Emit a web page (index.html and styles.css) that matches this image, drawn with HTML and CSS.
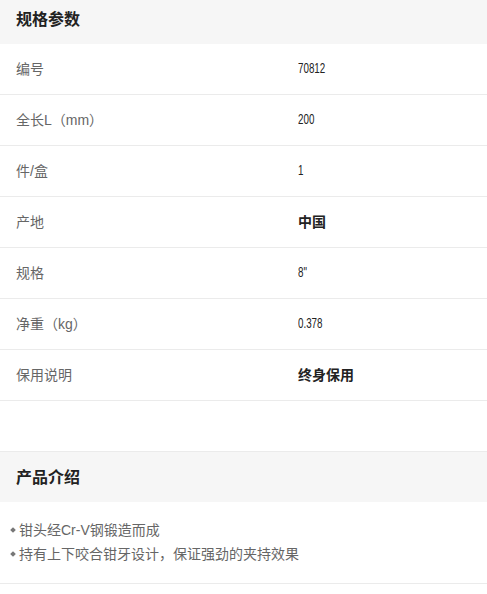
FILE: index.html
```html
<!DOCTYPE html>
<html lang="zh-CN">
<head>
  <meta charset="UTF-8" />
  <meta name="viewport" content="width=device-width, initial-scale=1.0" />
  <title>规格参数</title>
  <link rel="stylesheet" href="styles.css">
</head>
<body>
  <section class="specs">
    <h2 class="sec-title">规格参数</h2>
    <div class="row"><span class="label">编号</span><span class="val num">70812</span></div>
    <div class="row"><span class="label">全长L（mm）</span><span class="val num">200</span></div>
    <div class="row"><span class="label">件/盒</span><span class="val num">1</span></div>
    <div class="row"><span class="label">产地</span><span class="val">中国</span></div>
    <div class="row"><span class="label">规格</span><span class="val num">8"</span></div>
    <div class="row"><span class="label">净重（kg）</span><span class="val num">0.378</span></div>
    <div class="row"><span class="label">保用说明</span><span class="val">终身保用</span></div>
  </section>

  <section class="intro">
    <h2 class="sec-title">产品介绍</h2>
    <ul class="points">
      <li>钳头经Cr-V钢锻造而成</li>
      <li>持有上下咬合钳牙设计，保证强劲的夹持效果</li>
    </ul>
  </section>
</body>
</html>
```

FILE: styles.css
```css
:root{
  --gray-bg:#F6F6F6;
  --line:#EBEBEB;
  --label:#666666;
  --text:#222222;
}
*{box-sizing:border-box}
body{margin:0;font-family:"Liberation Sans","Noto Sans CJK SC",sans-serif;color:var(--text);background:#fff}
.specs{margin-top:-6px}
.sec-title{margin:0;height:50px;padding:0 16px 2px;display:flex;align-items:center;background:var(--gray-bg);font-size:16px;font-weight:700;color:var(--text)}
.row{display:grid;grid-template-columns:282px 1fr;align-items:center;height:51px;padding:0 16px 2px;border-bottom:1px solid var(--line)}
.row span{justify-self:start}
.label{font-size:14px;color:var(--label)}
.val{font-family:"Noto Sans CJK SC",sans-serif;font-size:14px;font-weight:700;color:var(--text)}
.val.num{display:inline-block;font-family:"Liberation Sans",sans-serif;font-size:14px;font-weight:400;transform:scaleX(.7);transform-origin:left center}
.intro{margin-top:50px;border-top:1px solid var(--line)}
.points{list-style:none;margin:0;padding:16px 10px 17px;border-bottom:1px solid var(--line)}
.points li{font-size:14px;line-height:24px;color:var(--label);display:flex;align-items:center}
.points li::before{content:"";width:4px;height:4px;margin:0 4px 0 1px;background:#777;transform:rotate(45deg)}
```
